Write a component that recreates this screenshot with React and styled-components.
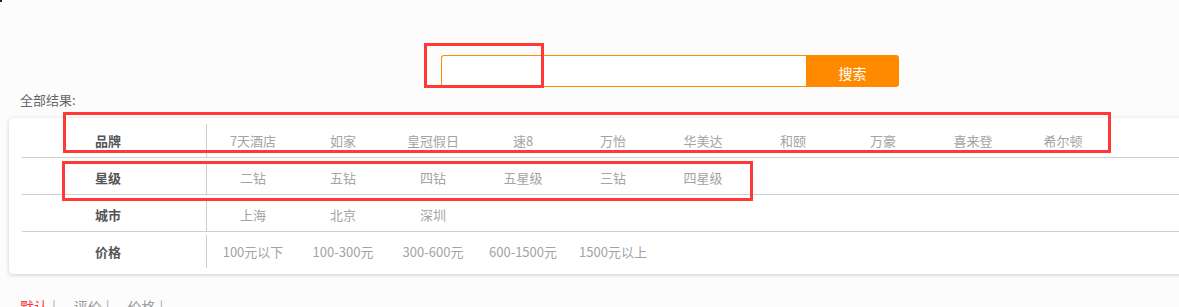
import React from "react";
import styled, { createGlobalStyle } from "styled-components";

const Global = createGlobalStyle`
  html, body { margin: 0; padding: 0; background: #fcfcfc; overflow: hidden; }
  body { font-family: "Noto Sans CJK SC", "Noto Sans", sans-serif; width: 1179px; height: 307px; }
  * { box-sizing: border-box; }
`;

const Page = styled.div`
  position: relative;
  width: 1179px;
  height: 307px;
  padding-top: 55px;
`;

const CornerDot = styled.div`
  position: absolute;
  left: 0;
  top: 0;
  width: 2px;
  height: 2px;
  background: #1a1a5a;
`;

const SearchBar = styled.form`
  display: flex;
  margin-left: 441px;
  width: 458px;
  height: 32px;
`;

const SearchInput = styled.input`
  flex: 1;
  height: 32px;
  border: 1px solid #ff8c00;
  border-right: none;
  border-radius: 3px 0 0 3px;
  background: #fff;
  outline: none;
  padding: 0 8px;
`;

const SearchButton = styled.button`
  width: 93px;
  height: 32px;
  border: none;
  border-radius: 0 3px 3px 0;
  background: #ff8a00;
  color: #fff;
  font-family: "Noto Sans CJK SC", sans-serif;
  font-size: 14px;
  padding-top: 4px;
  cursor: pointer;
`;

const ResultTitle = styled.div`
  margin: -2px 0 0 20px;
  height: 33px;
  padding-bottom: 4px;
  font-size: 13px;
  color: #666;
  display: flex;
  align-items: center;
`;

const Card = styled.div`
  margin-left: 9px;
  width: 1190px;
  background: #fff;
  border-radius: 4px;
  box-shadow: 0 1px 4px rgba(0, 0, 0, 0.18);
  padding: 3px 0 6px 13px;
`;

const Row = styled.div`
  display: flex;
  height: ${(p) => (p.$last ? "36px" : "37px")};
  border-bottom: ${(p) => (p.$last ? "none" : "1px solid #cfcfcf")};
`;

const Label = styled.div`
  width: 185px;
  margin-top: 3px;
  padding-right: 12px;
  border-right: 1px solid #cfcfcf;
  display: flex;
  align-items: center;
  justify-content: center;
  font-size: 13px;
  font-weight: 700;
  color: #555;
`;

const Items = styled.ul`
  display: flex;
  list-style: none;
  margin: 3px 0 0 1px;
  padding: 0;
`;

const Item = styled.li`
  width: 90px;
  display: flex;
  align-items: center;
  justify-content: center;
  font-size: 13px;
  color: #a3a3a3;
  white-space: nowrap;
  cursor: pointer;
`;

const Tabs = styled.div`
  display: flex;
  margin: 22px 0 0 20px;
  font-size: 14px;
  line-height: 20px;
  color: #999;
`;

const Tab = styled.span`
  color: ${(p) => (p.$active ? "#ff3333" : "#999")};
  margin-right: 4px;
`;

const Sep = styled.span`
  color: #aaa;
  margin-right: 18px;
`;

const Mark = styled.div`
  position: absolute;
  border: 3px solid #ff3838;
  pointer-events: none;
`;

const rows = [
  { label: "品牌", items: ["7天酒店", "如家", "皇冠假日", "速8", "万怡", "华美达", "和颐", "万豪", "喜来登", "希尔顿"] },
  { label: "星级", items: ["二钻", "五钻", "四钻", "五星级", "三钻", "四星级"] },
  { label: "城市", items: ["上海", "北京", "深圳"] },
  { label: "价格", items: ["100元以下", "100-300元", "300-600元", "600-1500元", "1500元以上"] },
];

const marks = [
  { left: 424, top: 43, width: 120, height: 45 },
  { left: 63, top: 112, width: 1048, height: 41 },
  { left: 62, top: 161, width: 691, height: 40 },
];

export default function App() {
  return (
    <>
      <Global />
      <Page>
        <CornerDot />
        <SearchBar onSubmit={(e) => e.preventDefault()}>
          <SearchInput type="text" />
          <SearchButton type="submit">搜索</SearchButton>
        </SearchBar>
        <ResultTitle>全部结果:</ResultTitle>
        <Card>
          {rows.map((r, i) => (
            <Row key={r.label} $last={i === rows.length - 1}>
              <Label>{r.label}</Label>
              <Items>
                {r.items.map((it) => (
                  <Item key={it}>{it}</Item>
                ))}
              </Items>
            </Row>
          ))}
        </Card>
        <Tabs>
          <Tab $active>默认</Tab>
          <Sep>|</Sep>
          <Tab>评价</Tab>
          <Sep>|</Sep>
          <Tab>价格</Tab>
          <Sep>|</Sep>
        </Tabs>
        {marks.map((m, i) => (
          <Mark key={i} style={{ left: m.left, top: m.top, width: m.width, height: m.height }} />
        ))}
      </Page>
    </>
  );
}
